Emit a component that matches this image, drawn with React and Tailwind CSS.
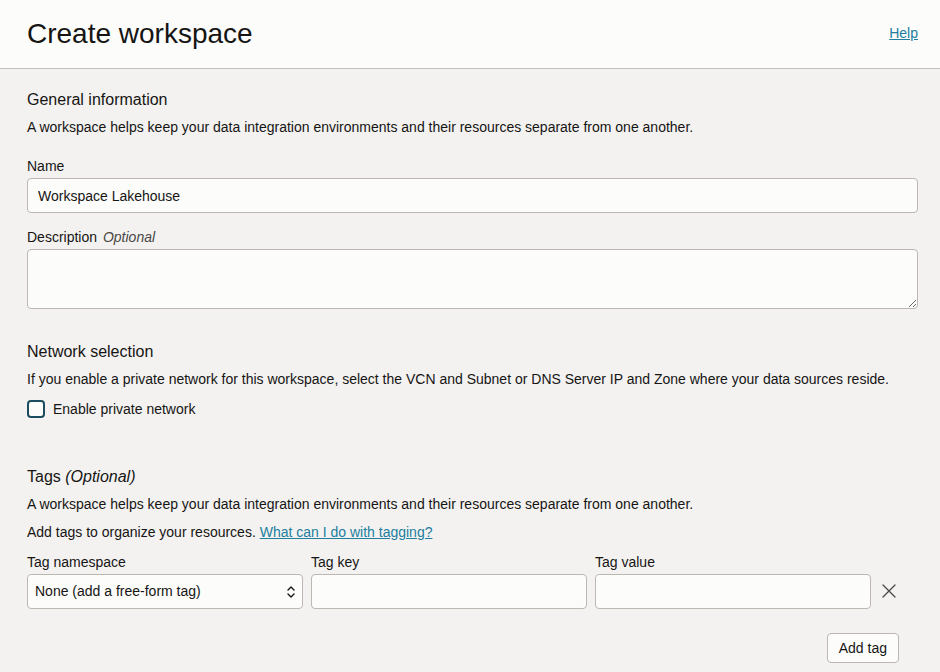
import React from 'react';

const Label = ({ children }) => (
  <div className="text-[14px] leading-[18px] text-[#161513] mb-[3px]">{children}</div>
);

const App = () => {
  return (
    <div className="min-h-[672px] w-[940px] bg-[#f3f2f1] text-[#161513] font-['Liberation_Sans',Arial,sans-serif]">
      {/* Header */}
      <header className="h-[69px] bg-[#fcfcfb] border-b border-[#c3bfba] flex items-center justify-between pl-[27px] pr-[22px]">
        <h1 className="text-[28px] leading-8 text-[#161513]">Create workspace</h1>
        <a href="#" className="text-[14px] text-[#227e9e] underline mb-[2px]">Help</a>
      </header>

      <main className="px-[27px] pt-[21px] pr-[22px]">
        {/* General information */}
        <section>
          <h2 className="text-[16px] leading-5">General information</h2>
          <p className="text-[14px] leading-5 mt-[7px]">
            A workspace helps keep your data integration environments and their resources separate from one another.
          </p>

          <div className="mt-[20px]">
            <Label>Name</Label>
            <input
              defaultValue="Workspace Lakehouse"
              className="block w-full h-[35px] rounded-[4px] border border-[#bcb7b1] bg-[#fcfcfb] px-[10px] text-[14px] outline-none"
            />
          </div>

          <div className="mt-[15px]">
            <Label>
              Description <span className="italic text-[#4a4845] ml-[2px]">Optional</span>
            </Label>
            <textarea
              className="block w-full h-[60px] rounded-[4px] border border-[#bcb7b1] bg-[#fcfcfb] px-[10px] py-2 text-[14px] outline-none"
            />
          </div>
        </section>

        {/* Network selection */}
        <section className="mt-[33px]">
          <h2 className="text-[16px] leading-5">Network selection</h2>
          <p className="text-[14px] leading-5 mt-[7px]">
            If you enable a private network for this workspace, select the VCN and Subnet or DNS Server IP and Zone where your data sources reside.
          </p>
          <label className="flex items-center h-[20px] mt-[10px] gap-[8px]">
            <span className="w-[18px] h-[18px] rounded-[4px] border-2 border-[#1c4d5f] bg-[#fcfcfb]" />
            <span className="text-[14px]">Enable private network</span>
          </label>
        </section>

        {/* Tags */}
        <section className="mt-[48px]">
          <h2 className="text-[16px] leading-5">
            Tags <span className="italic">(Optional)</span>
          </h2>
          <p className="text-[14px] leading-5 mt-[7px]">
            A workspace helps keep your data integration environments and their resources separate from one another.
          </p>
          <p className="text-[14px] leading-5 mt-[8px]">
            Add tags to organize your resources.{' '}
            <a href="#" className="text-[#227e9e] underline">What can I do with tagging?</a>
          </p>

          <div className="flex items-end mt-[11px] gap-[8px]">
            <div className="w-[276px]">
              <Label>Tag namespace</Label>
              <div className="h-[35px] rounded-[4px] border border-[#bcb7b1] bg-[#fcfcfb] flex items-center justify-between pl-[7px] pr-[4px]">
                <span className="text-[14px]">None (add a free-form tag)</span>
                <svg width="14" height="18" viewBox="0 0 14 18" fill="none" stroke="#161513" strokeWidth="1.4" strokeLinecap="round" strokeLinejoin="round">
                  <path d="M4 7l3-3 3 3" />
                  <path d="M4 11l3 3 3-3" />
                </svg>
              </div>
            </div>
            <div className="w-[276px]">
              <Label>Tag key</Label>
              <input className="block w-full h-[35px] rounded-[4px] border border-[#bcb7b1] bg-[#fcfcfb] px-[10px] text-[14px] outline-none" />
            </div>
            <div className="w-[276px]">
              <Label>Tag value</Label>
              <input className="block w-full h-[35px] rounded-[4px] border border-[#bcb7b1] bg-[#fcfcfb] px-[10px] text-[14px] outline-none" />
            </div>
            <button className="h-[35px] w-[20px] flex items-center justify-center pb-[2px]">
              <svg width="16" height="16" viewBox="0 0 16 16" stroke="#4a4845" strokeWidth="1.3" strokeLinecap="round">
                <path d="M2 2l12 12M14 2L2 14" />
              </svg>
            </button>
          </div>

          <div className="flex justify-end mt-[24px] pr-[19px]">
            <button className="h-[30px] px-[11px] rounded-[4px] border border-[#bcb7b1] bg-[#fcfcfb] text-[14px]">
              Add tag
            </button>
          </div>
        </section>
      </main>
    </div>
  );
};

export default App;
